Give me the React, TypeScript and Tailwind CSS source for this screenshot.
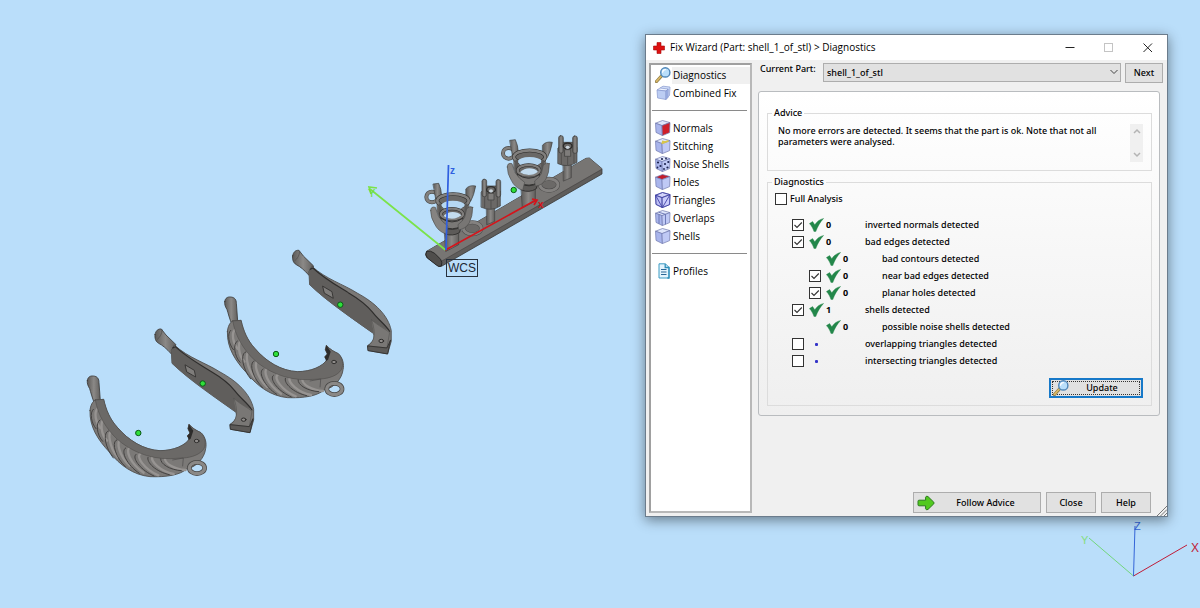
import { useState } from 'react';
import type { ReactNode } from 'react';

/* ---------- small icons ---------- */

const CUBE_TOP = '0.5,3.2 7.5,0.5 15,2.6 7,5.6';
const CUBE_LEFT = '0.5,3.2 7,5.6 7.4,15.6 1,12.4';
const CUBE_RIGHT = '7,5.6 15,2.6 14.6,12.6 7.4,15.6';

type CubeProps = {
  top?: string;
  left?: string;
  right?: string;
  children?: ReactNode;
};

function Cube({ top = '#dfe6fb', left = '#a9b5ec', right = '#bfc9f5', children }: CubeProps) {
  return (
    <svg viewBox="0 0 16 16" className="h-4 w-4 shrink-0" aria-hidden="true">
      <g stroke="#7078ae" strokeWidth="0.7" strokeLinejoin="round">
        <polygon points={CUBE_TOP} fill={top} />
        <polygon points={CUBE_LEFT} fill={left} />
        <polygon points={CUBE_RIGHT} fill={right} />
      </g>
      {children}
    </svg>
  );
}

function MagnifierIcon() {
  return (
    <svg viewBox="0 0 16 16" className="h-4 w-4 shrink-0" aria-hidden="true">
      <path d="M1.5 14.5 6.5 9" stroke="#8a7a45" strokeWidth="3.2" strokeLinecap="round" />
      <path d="M1.5 14.3 6.3 9" stroke="#d9b766" strokeWidth="1.8" strokeLinecap="round" />
      <circle cx="10.3" cy="5.4" r="4.6" fill="#b9defa" stroke="#4f86b8" strokeWidth="1.4" />
      <path d="M7.6 5.2a2.9 2.9 0 0 1 2.8-2.6" stroke="#fff" strokeWidth="1.2" fill="none" strokeLinecap="round" />
    </svg>
  );
}

function CombinedIcon() {
  return (
    <svg viewBox="0 0 16 16" className="h-4 w-4 shrink-0" aria-hidden="true">
      <g stroke="#8698cf" strokeWidth="0.7" strokeLinejoin="round">
        <polygon points="5,3 8,1.2 15,2 14.5,10.5 12,12.5 5,11" fill="#cfdcf8" />
        <polygon points="2,5 5,3 13,4 11,6" fill="#eef3ff" />
        <polygon points="2,5 11,6 11,14.5 2.6,13" fill="#bccdf3" />
        <polygon points="11,6 13.2,4 13,12.5 11,14.5" fill="#9fb2e6" />
      </g>
    </svg>
  );
}

function ProfilesIcon() {
  return (
    <svg viewBox="0 0 16 16" className="h-4 w-4 shrink-0" aria-hidden="true">
      <path d="M4 0.8h6.4L14 4.3V15H4z" fill="#e4f4fd" stroke="#3d9cc4" strokeWidth="1" />
      <path d="M10.2 1v3.5H14V15h-1.6" fill="none" stroke="#2f8fba" strokeWidth="1.3" />
      <path d="M6 6.5h5.5M6 9h5.5M6 11.5h5.5" stroke="#2a6796" strokeWidth="1.2" />
    </svg>
  );
}

function GreenCheck() {
  return (
    <svg viewBox="0 0 15 14" className="h-3.5 w-[15px] shrink-0" aria-hidden="true">
      <path
        d="M0.4 5.6 3.6 3.6 5.8 6.8C7.8 3.6 10.4 1.4 14.6 0.4 11 4.2 8.6 8.6 6.8 13.6H5C4 10.6 2.6 7.8 0.4 5.6z"
        fill="#23874a"
        stroke="#23874a"
        strokeWidth="0.4"
      />
    </svg>
  );
}

function BlueDot() {
  return (
    <svg viewBox="0 0 15 14" className="h-3.5 w-[15px] shrink-0" aria-hidden="true">
      <rect x="6" y="6" width="3" height="3" rx="1" fill="#3434c8" />
    </svg>
  );
}

function ArrowIcon() {
  return (
    <svg viewBox="0 0 18 16" className="h-4 w-[18px] shrink-0" aria-hidden="true">
      <path
        d="M1 6.2Q1 5.2 2 5.2H8.6V2.2Q9.4 0.4 11 1.6L16.8 7.2Q17.4 8 16.8 8.8L11 14.4Q9.4 15.6 8.6 13.8V10.8H2Q1 10.8 1 9.8z"
        fill="#52c91f"
        stroke="#2c7a20"
        strokeWidth="1"
      />
    </svg>
  );
}

/* ---------- 3D parts ---------- */

function Marker({ x, y }: { x: number; y: number }) {
  return <circle cx={x} cy={y} r="2.7" fill="#2fe03a" stroke="#0c5a18" strokeWidth="1" />;
}

const strands = [
  'M70 148C58 158 64 190 78 206',
  'M90 180C76 186 80 226 98 244',
  'M115 213C98 216 104 262 130 294',
  'M140 240C124 244 134 290 166 320',
  'M167 264C152 270 166 312 208 340',
  'M198 283C184 292 210 330 252 348',
  'M234 292C228 306 258 336 298 344',
  'M272 296C270 312 300 330 334 332',
];

// Rope-like half of the bracelet
function RopePart() {
  return (
    <g strokeLinejoin="round" strokeLinecap="round">
      <path d="M52 62C53 50 62 47 70 48C82 49 87 56 87 68L91 122L74 132C66 112 62 96 59 86C53 76 51 70 52 62z" fill="url(#metal)" stroke="#3b3a39" strokeWidth="2.5" />
      <path d="M60 152C61 136 68 124 76 120L101 118C108 150 120 178 142 202C176 242 222 270 270 272C312 272 346 256 359 236L352 228L360 219L354 206L357 193C368 206 380 212 393 218C406 230 411 250 407 266C404 292 382 320 350 327C330 345 290 352 240 350C190 345 150 316 118 276C84 240 58 200 60 152z" fill="#7b7977" stroke="#4a4948" strokeWidth="2.5" />
      <g fill="none" stroke="#979492" strokeWidth="7" transform="translate(13 -2)">
        {strands.map((d) => (
          <path key={d} d={d} />
        ))}
      </g>
      <g fill="none" stroke="#434140" strokeWidth="3">
        {strands.map((d) => (
          <path key={d} d={d} />
        ))}
      </g>
      <path d="M76 120L101 118C108 150 120 178 142 202C176 242 222 270 270 272C312 272 346 256 359 236L352 228L360 219L354 206L357 193C368 206 380 212 393 218C406 232 409 250 402 266C390 284 366 292 340 294L302 296C232 298 176 268 142 238C108 206 84 166 76 120z" fill="#6b6967" stroke="#484645" strokeWidth="1.5" />
      <path d="M308 300L340 294L338 318" fill="none" stroke="#4a4948" strokeWidth="2" />
      <path d="M357 193L370 212L362 236L356 240L352 228L360 219L354 206z" fill="#2d2c2b" />
      <ellipse cx="380" cy="243" rx="7" ry="5" fill="#8f8c8a" stroke="#2f2e2d" strokeWidth="3" />
      <ellipse cx="381" cy="324" rx="23" ry="17" fill="none" stroke="#484746" strokeWidth="14" />
      <ellipse cx="381" cy="324" rx="23" ry="17" fill="none" stroke="#8a8886" strokeWidth="10" />
    </g>
  );
}

// Smooth half of the bracelet with the slot and the clasp end
function ClaspPart() {
  return (
    <g strokeLinejoin="round" strokeLinecap="round">
      <path d="M45 44C47 32 54 26 64 27L78 45L108 74L94 102C80 86 68 76 56 70C46 64 44 54 45 44z" fill="url(#metal)" stroke="#3b3a39" strokeWidth="2.5" />
      <path d="M52 58C60 52 66 42 66 30" fill="none" stroke="#4c4a49" strokeWidth="2" />
      <path d="M104 76C146 114 196 128 240 156C292 184 332 222 341 268L341 300L330 338L272 328L270 313C286 302 292 292 288 277C228 234 150 182 96 130L94 92z" fill="#7a7876" stroke="#4a4948" strokeWidth="2.5" />
      <path d="M98 84L106 80C140 112 180 134 212 154C246 174 270 194 284 212C300 236 320 246 334 268C320 262 300 250 282 236C282 250 288 262 288 277C228 234 150 182 96 130L94 92z" fill="#605e5c" />
      <path d="M98 84L106 80C140 112 180 134 212 154C246 174 270 194 284 212C300 234 322 248 336 270" fill="none" stroke="#2e2d2c" strokeWidth="3.5" />
      <path d="M282 236C306 256 322 262 336 274L328 320L271 314C288 302 298 282 282 236z" fill="#797775" stroke="#4b4a49" strokeWidth="1.5" />
      <path d="M271 314L328 320L339 296L330 338L272 328z" fill="#5c5a58" stroke="#2f2e2d" strokeWidth="2.5" />
      <path d="M136 135L163 151L167 171L141 156z" fill="#7f7d7b" stroke="#2f2e2d" strokeWidth="2.5" />
      <ellipse cx="311" cy="299" rx="7" ry="5" fill="#8f8c8a" stroke="#2b2a29" strokeWidth="3" />
    </g>
  );
}

// Ring setting with its small prong head and jump ring
function Setting() {
  return (
    <g strokeLinejoin="round" strokeLinecap="round">
      <ellipse cx="66" cy="231" rx="17" ry="16" fill="none" stroke="#4a4948" strokeWidth="12" />
      <ellipse cx="66" cy="231" rx="17" ry="16" fill="none" stroke="#82807e" strokeWidth="8" />
      <ellipse cx="187" cy="325" rx="27" ry="18" fill="#6b6967" stroke="#4a4948" strokeWidth="12" />
      <ellipse cx="187" cy="325" rx="27" ry="18" fill="none" stroke="#83817f" strokeWidth="9" />
      {/* small head */}
      <path d="M230 262H254V304L231 314z" fill="url(#metal)" stroke="#444342" strokeWidth="2" />
      <path d="M214 216L228 198H258L271 214V258Q244 276 214 262z" fill="#6b6967" stroke="#3d3c3b" strokeWidth="2" />
      <rect x="216" y="178" width="14" height="52" rx="6" fill="url(#metal)" stroke="#3d3c3b" strokeWidth="2" />
      <rect x="258" y="179" width="14" height="52" rx="6" fill="url(#metal)" stroke="#3d3c3b" strokeWidth="2" />
      <ellipse cx="243" cy="209" rx="13" ry="9" fill="#6b6967" stroke="#2b2a29" strokeWidth="4" />
      <ellipse cx="243" cy="213" rx="6" ry="5" fill="#c9d3db" />
      <path d="M235 220H252V240H235z" fill="#7f7d7b" stroke="#3d3c3b" strokeWidth="2" />
      <path d="M224 232V262M262 230V260M243 242V266" stroke="#454443" strokeWidth="2" />
      {/* cup */}
      <path d="M104 336H146V374L108 394z" fill="url(#metal)" stroke="#3d3c3b" strokeWidth="2" />
      <path d="M70 192L86 190Q94 206 95 228L78 236z" fill="url(#metal)" stroke="#3d3c3b" strokeWidth="2" />
      <path d="M168 206Q178 194 197 198Q192 226 182 244L168 234z" fill="url(#metal)" stroke="#3d3c3b" strokeWidth="2" />
      <path d="M80 238V274L98 312V336Q126 354 154 336V312L178 272V238z" fill="#6d6b69" />
      <ellipse cx="129" cy="242" rx="47" ry="20" fill="#6a6866" stroke="#2b2a29" strokeWidth="11" />
      <ellipse cx="129" cy="242" rx="47" ry="20" fill="none" stroke="#82807e" strokeWidth="8" />
      <path d="M92 256Q100 242 128 242Q158 242 168 256Q158 262 150 268Q128 260 104 268Q98 262 92 256z" fill="#b5d7f2" />
      <path d="M90 254V290M168 254V290" stroke="#5a5856" strokeWidth="9" />
      <ellipse cx="126" cy="282" rx="33" ry="16" fill="#6a6866" stroke="#2b2a29" strokeWidth="10" />
      <ellipse cx="126" cy="282" rx="33" ry="16" fill="none" stroke="#7f7d7b" strokeWidth="7" />
      <path d="M100 288Q112 276 128 276Q144 276 154 286Q142 296 126 296Q110 296 100 288z" fill="#c3dcef" />
      <path d="M92 294Q126 318 160 294L154 318Q128 334 100 320z" fill="#7a7876" stroke="#2b2a29" strokeWidth="2.5" />
      <path d="M100 322Q128 336 154 320L148 338Q128 350 106 342z" fill="#5d5b59" stroke="#2b2a29" strokeWidth="2.5" />
      <path d="M62 272Q62 258 76 262L86 290Q98 308 114 318L108 342Q84 334 74 312Q62 294 62 272z" fill="#858381" stroke="#4f4e4d" strokeWidth="2" />
      <path d="M188 262Q180 256 170 266L164 292Q156 306 144 314L146 330Q168 326 178 308Q188 290 188 262z" fill="#787674" stroke="#4f4e4d" strokeWidth="2" />
    </g>
  );
}

function Scene() {
  return (
    <svg viewBox="0 0 640 608" className="absolute left-0 top-0 h-[608px] w-[640px]" role="img" aria-label="3D view">
      <defs>
        <linearGradient id="metal" x1="0" x2="1" y1="0" y2="0">
          <stop offset="0" stopColor="#5c5a58" />
          <stop offset="0.5" stopColor="#8b8987" />
          <stop offset="1" stopColor="#615f5d" />
        </linearGradient>
      </defs>
      <g transform="translate(70 360) scale(0.3333)">
        <RopePart />
      </g>
      <g transform="translate(207.4 281) scale(0.3333)">
        <RopePart />
      </g>
      <g transform="translate(140 320) scale(0.3333)">
        <ClaspPart />
      </g>
      <g transform="translate(277.6 241.3) scale(0.3333)">
        <ClaspPart />
      </g>
      <g transform="translate(410 120) scale(0.3333)">
        <path d="M50 394L528 115L538 114L576 146V162L96 438Q88 442 82 436L50 412Q44 404 50 394z" fill="#5f5d5b" stroke="#3b3a39" strokeWidth="2.5" />
        <path d="M50 394L528 115L538 114L576 146L94 424z" fill="#777573" />
        <path d="M94 424L576 148" stroke="#484645" strokeWidth="2" />
        <path d="M50 394Q60 390 74 400L92 418Q98 428 94 438Q86 442 80 436L52 414Q44 404 50 394z" fill="#504e4c" stroke="#222" strokeWidth="2.5" />
        <g transform="translate(230 -131)">
          <Setting />
        </g>
        <Setting />
      </g>
      {/* part axes */}
      <g fill="none" strokeWidth="1.7">
        <path d="M445.5 250 370 189M371 194 369 187 377 188" stroke="#7be34a" />
        <path d="M445.5 250 536 200M532 199 537 200 534 205" stroke="#d5141b" />
        <path d="M446 250 448.5 165" stroke="#2f5fe0" />
      </g>
      <g fontFamily="'Liberation Sans', Arial, sans-serif">
        <text x="368" y="197" fontSize="11" fill="#6fdc3c">Y</text>
        <text x="538" y="208" fontSize="10" fontWeight="bold" fill="#d5141b">x</text>
        <text x="450" y="174" fontSize="10" fontWeight="bold" fill="#2f5fe0">z</text>
        <rect x="446.5" y="259.5" width="31" height="17" fill="none" stroke="#27313c" />
        <text x="448" y="272" fontSize="12" fill="#1c2733">WCS</text>
      </g>
      <Marker x={138.3} y={433} />
      <Marker x={276} y={354} />
      <Marker x={202.7} y={383.5} />
      <Marker x={340.3} y={304.7} />
      <Marker x={513.7} y={190} />
    </svg>
  );
}

function AxisGizmo() {
  return (
    <svg viewBox="0 0 120 62" className="absolute bottom-7 right-0 h-[62px] w-[120px]" role="img" aria-label="View axes">
      <g fill="none" strokeWidth="1">
        <path d="M53.5 58 9 20" stroke="#72d67c" />
        <path d="M53.5 58 107 27" stroke="#c01c38" />
        <path d="M53.5 58 55 8" stroke="#3465d8" />
      </g>
      <g fontFamily="'Liberation Sans', Arial, sans-serif" fontSize="11">
        <text x="1" y="26" fill="#86dd80">Y</text>
        <text x="54" y="12" fill="#3465d8">Z</text>
        <text x="111" y="34" fontSize="12" fill="#c01c38">X</text>
      </g>
    </svg>
  );
}

/* ---------- dialog ---------- */

const fixPages: { name: string; icon: ReactNode }[] = [
  { name: 'Normals', icon: <Cube right="#cf1f2a" /> },
  {
    name: 'Stitching',
    icon: (
      <Cube>
        <path d="M6.5 5.4 13.5 2.8M7 3.5 10.5 4.2" stroke="#d8c64a" strokeWidth="1.8" />
      </Cube>
    ),
  },
  {
    name: 'Noise Shells',
    icon: (
      <Cube>
        <g fill="#1d2350">
          <circle cx="3" cy="6.5" r="1.1" />
          <circle cx="5.5" cy="10" r="1.1" />
          <circle cx="2.5" cy="11.5" r="0.9" />
          <circle cx="7" cy="3" r="1.1" />
          <circle cx="11" cy="2.5" r="0.9" />
          <circle cx="10" cy="8" r="1.1" />
          <circle cx="13.3" cy="6" r="1.1" />
          <circle cx="12.5" cy="11.5" r="1.1" />
          <circle cx="9" cy="13" r="0.9" />
        </g>
      </Cube>
    ),
  },
  { name: 'Holes', icon: <Cube top="#c41e2c" /> },
  {
    name: 'Triangles',
    icon: (
      <Cube top="#d3d4fa" left="#bcbef5" right="#c9cbfa">
        <path d="M0.5 3.2 7.4 15.6 15 2.6M0.5 3.2 7 5.6 15 2.6 7.5 0.5zM7 5.6V15.6M0.5 3.2 1 12.4 7.4 15.6 14.6 12.6 15 2.6" stroke="#4343a8" strokeWidth="0.9" fill="none" />
      </Cube>
    ),
  },
  {
    name: 'Overlaps',
    icon: (
      <Cube>
        <path d="M3.5 2.2 10.5 4.3V14.4M4 4.3V13.8" stroke="#6570b0" strokeWidth="0.9" fill="none" />
      </Cube>
    ),
  },
  { name: 'Shells', icon: <Cube /> },
];

type Result = {
  id: string;
  text: string;
  count?: number;
  checked?: boolean;
  child?: boolean;
};

const results: Result[] = [
  { id: 'normals', text: 'inverted normals detected', count: 0, checked: true },
  { id: 'edges', text: 'bad edges detected', count: 0, checked: true },
  { id: 'contours', text: 'bad contours detected', count: 0, child: true },
  { id: 'near', text: 'near bad edges detected', count: 0, checked: true, child: true },
  { id: 'holes', text: 'planar holes detected', count: 0, checked: true, child: true },
  { id: 'shells', text: 'shells detected', count: 1, checked: true },
  { id: 'noise', text: 'possible noise shells detected', count: 0, child: true },
  { id: 'overlapping', text: 'overlapping triangles detected', checked: false },
  { id: 'intersecting', text: 'intersecting triangles detected', checked: false },
];

function CheckBox({ id, initial }: { id: string; initial: boolean }) {
  const [on, setOn] = useState(initial);
  return (
    <span className="relative h-3 w-3 shrink-0">
      <input
        id={id}
        type="checkbox"
        checked={on}
        onChange={() => setOn(!on)}
        className="block h-3 w-3 appearance-none border border-[#333] bg-white"
      />
      {on && (
        <svg viewBox="0 0 12 12" className="pointer-events-none absolute inset-0 h-3 w-3" aria-hidden="true">
          <path d="M2.5 6 5 8.5 9.8 3.5" fill="none" stroke="#333" strokeWidth="1.1" />
        </svg>
      )}
    </span>
  );
}

function ResultRow({ item }: { item: Result }) {
  return (
    <li className={`flex h-[17px] items-center ${item.child ? 'pl-[41px]' : 'pl-6'}`}>
      {item.checked === undefined ? <span className="w-3" /> : <CheckBox id={item.id} initial={item.checked} />}
      <span className="ml-[5px] flex">{item.count === undefined ? <BlueDot /> : <GreenCheck />}</span>
      <span className="ml-0.5 w-[39px] font-bold">{item.count}</span>
      {item.checked === undefined ? <span>{item.text}</span> : <label htmlFor={item.id}>{item.text}</label>}
    </li>
  );
}

function PageLink({ name, icon, active }: { name: string; icon: ReactNode; active?: boolean }) {
  return (
    <button type="button" className="flex h-[18px] w-full items-center pl-[3px] text-left">
      {icon}
      <span className={`ml-px flex-1 pl-px leading-[17px] ${active ? 'bg-[#f0f0f0]' : ''}`}>{name}</span>
    </button>
  );
}

function Sidebar() {
  return (
    <nav className="w-[103px] shrink-0 border-2 border-[#a0a0a0] border-b-[#b8b8b8] border-r-[#b8b8b8] bg-white pl-px pt-px">
      <PageLink name="Diagnostics" icon={<MagnifierIcon />} active />
      <PageLink name="Combined Fix" icon={<CombinedIcon />} />
      <hr className="my-2 mr-[3px] border-[#8a8a8a]" />
      {fixPages.map((page) => (
        <PageLink key={page.name} name={page.name} icon={page.icon} />
      ))}
      <hr className="my-2 mr-[3px] border-[#8a8a8a]" />
      <PageLink name="Profiles" icon={<ProfilesIcon />} />
    </nav>
  );
}

function TitleBar() {
  return (
    <header className="flex h-[25px] items-center bg-white pl-[7px]">
      <svg viewBox="0 0 12 12" className="h-3 w-3" aria-hidden="true">
        <path d="M4 0.5h4V4h3.5v4H8v3.5H4V8H0.5V4H4z" fill="#dd1111" stroke="#a80c0c" strokeWidth="0.6" />
      </svg>
      <h1 className="ml-[5px] flex-1">Fix Wizard (Part: shell_1_of_stl) &gt; Diagnostics</h1>
      <button type="button" aria-label="Minimize" className="flex w-[39px] justify-center">
        <svg viewBox="0 0 10 10" className="h-2.5 w-2.5">
          <path d="M0.5 4.5h9" stroke="#222" />
        </svg>
      </button>
      <button type="button" aria-label="Maximize" disabled className="flex w-[39px] justify-center">
        <svg viewBox="0 0 10 10" className="h-2.5 w-2.5">
          <rect x="0.5" y="0.5" width="8" height="8" fill="none" stroke="#c4c4c4" />
        </svg>
      </button>
      <button type="button" aria-label="Close window" className="flex w-[39px] justify-center">
        <svg viewBox="0 0 10 10" className="h-2.5 w-2.5">
          <path d="M0.5 0.5 9 9M9 0.5 0.5 9" stroke="#222" />
        </svg>
      </button>
    </header>
  );
}

function Advice() {
  return (
    <fieldset className="border border-[#dcdcdc] pb-2 pl-2.5 pr-2">
      <legend className="-ml-1.5 px-0.5 leading-3">Advice</legend>
      <div className="flex justify-between pt-[5px]">
        <p className="w-[336px] pt-px leading-[11px]">
          No more errors are detected. It seems that the part is ok. Note that not all parameters were analysed.
        </p>
        <div className="flex h-[38px] w-[13px] flex-col items-center justify-between bg-[#f0f0f0] py-1">
          <button type="button" aria-label="Scroll up">
            <svg viewBox="0 0 8 6" className="block h-1.5 w-2">
              <path d="M1 5 4 2 7 5" fill="none" stroke="#b4b4b4" strokeWidth="1.5" />
            </svg>
          </button>
          <button type="button" aria-label="Scroll down">
            <svg viewBox="0 0 8 6" className="block h-1.5 w-2">
              <path d="M1 1 4 4 7 1" fill="none" stroke="#b4b4b4" strokeWidth="1.5" />
            </svg>
          </button>
        </div>
      </div>
    </fieldset>
  );
}

function Diagnostics() {
  return (
    <fieldset className="mt-[5px] border border-[#dcdcdc] pb-[7px]">
      <legend className="ml-1 px-0.5 leading-3">Diagnostics</legend>
      <div className="flex items-center gap-[3px] pl-[7px] pt-[5px]">
        <CheckBox id="full" initial={false} />
        <label htmlFor="full" className="leading-3">
          Full Analysis
        </label>
      </div>
      <ul className="mt-[11px]">
        {results.map((item) => (
          <ResultRow key={item.id} item={item} />
        ))}
      </ul>
      <div className="mt-[9px] flex justify-end pr-2">
        <button type="button" className="flex h-5 w-[94px] items-center border-2 border-[#1779c9] bg-[#e1e1e1] p-px">
          <span className="flex h-full w-full items-center border border-dotted border-[#333]">
            <MagnifierIcon />
            <span className="flex-1 pr-1 text-center">Update</span>
          </span>
        </button>
      </div>
    </fieldset>
  );
}

function FixWizard() {
  const button = 'h-[21px] border border-[#adadad] bg-[#e1e1e1] text-center';
  return (
    <section className="absolute right-8 top-[34px] flex h-[483px] w-[523px] flex-col border border-[#6b7c8c] bg-[#f0f0f0] font-['Open_Sans',sans-serif] text-[10px] text-black shadow-[0_3px_12px_rgba(0,0,0,0.45)]">
      <TitleBar />
      <div className="flex flex-1 py-[3px] pl-[3px] pr-1">
        <Sidebar />
        <div className="flex min-w-0 flex-1 flex-col pl-1.5 font-['Noto_Sans',sans-serif] text-[9px] font-medium">
          <div className="flex">
            <label htmlFor="part" className="w-[65px] shrink-0 pl-0.5 leading-3">
              Current Part:
            </label>
            <div className="relative flex-1">
              <select id="part" className="block h-[19px] w-full appearance-none border border-[#adadad] bg-[#e1e1e1] pl-[3px]">
                <option>shell_1_of_stl</option>
              </select>
              <svg viewBox="0 0 8 6" className="pointer-events-none absolute right-[3px] top-1.5 h-1.5 w-2" aria-hidden="true">
                <path d="M0.5 1 4 4.5 7.5 1" fill="none" stroke="#444" />
              </svg>
            </div>
            <button type="button" className="ml-1 h-5 w-[38px] border border-[#adadad] bg-[#e1e1e1]">
              Next
            </button>
          </div>
          <div className="mr-[3px] mt-2 rounded-[3px] border border-[#b9bcbf] bg-linear-to-b from-white to-[#efefef] pb-[9px] pl-2 pr-[7px] pt-[15px]">
            <Advice />
            <Diagnostics />
          </div>
          <footer className="mt-auto flex justify-end gap-[5px] pr-3">
            <button type="button" className={`${button} flex w-[128px] items-center pl-[3px]`}>
              <ArrowIcon />
              <span className="flex-1 pr-1">Follow Advice</span>
            </button>
            <button type="button" className={`${button} w-[50px]`}>
              Close
            </button>
            <button type="button" className={`${button} w-[50px]`}>
              Help
            </button>
          </footer>
        </div>
      </div>
      {/* resize grip */}
      <svg viewBox="0 0 10 10" className="absolute bottom-0 right-0 h-2.5 w-2.5" aria-hidden="true">
        <path d="M0 10 10 0M3.5 10 10 3.5M7 10 10 7" stroke="#777" />
      </svg>
    </section>
  );
}

export default function App() {
  return (
    <main className="relative min-h-screen w-full overflow-hidden bg-[#badefa]">
      <Scene />
      <AxisGizmo />
      <FixWizard />
    </main>
  );
}
